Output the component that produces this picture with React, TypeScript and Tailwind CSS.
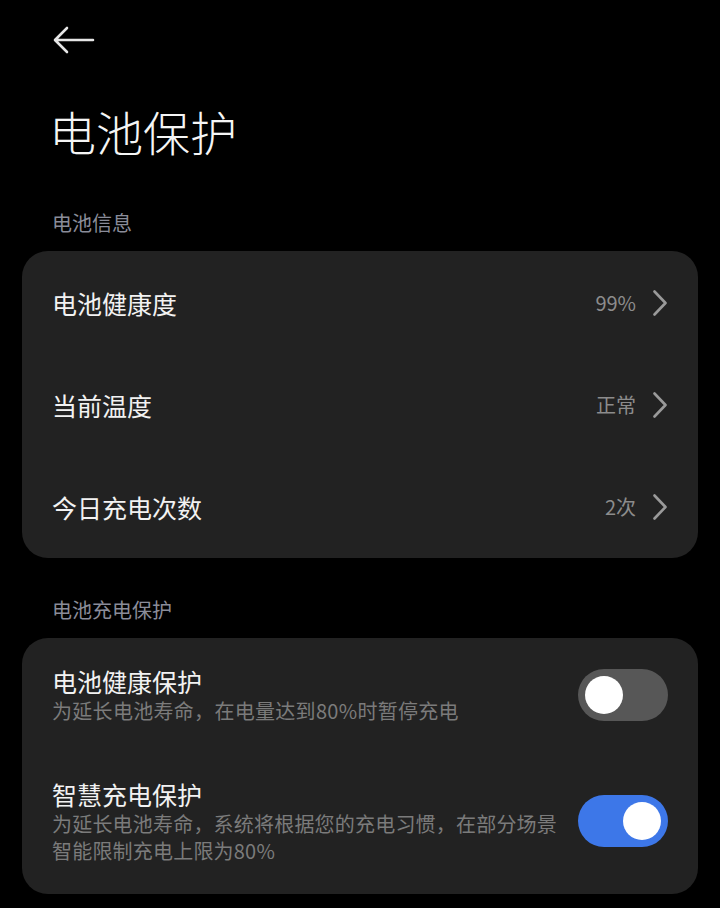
import React from 'react';

const font = { fontFamily: '"Noto Sans CJK SC", "Noto Sans", sans-serif' };

function Chevron() {
  return (
    <svg width="16" height="26" viewBox="0 0 16 26" fill="none" className="ml-[16px]">
      <path d="M2.5 1.5 L13.5 13 L2.5 24.5" stroke="#9a9a9a" strokeWidth="2.6" strokeLinecap="round" strokeLinejoin="round" />
    </svg>
  );
}

function Toggle({ on }: { on: boolean }) {
  return (
    <div
      className={`w-[90px] h-[52px] rounded-full flex items-center px-[7px] shrink-0 ${
        on ? 'bg-[#3d77e8] justify-end' : 'bg-[#575757] justify-start'
      }`}
    >
      <div className="w-[38px] h-[38px] rounded-full bg-white" />
    </div>
  );
}

const infoRows = [
  { label: '电池健康度', value: '99%' },
  { label: '当前温度', value: '正常' },
  { label: '今日充电次数', value: '2次' },
];

export default function App() {
  return (
    <div className="bg-black min-h-[908px] w-[720px] px-[22px] text-[#f2f2f2]" style={font}>
      <div className="h-[80px] flex items-center pl-[31px]">
        <svg width="42" height="28" viewBox="0 0 42 28" fill="none">
          <path d="M40 14 H3 M14 2 L2 14 L14 26" stroke="#e6e6e6" strokeWidth="2.6" strokeLinecap="round" strokeLinejoin="round" />
        </svg>
      </div>

      <h1 className="mt-[23px] pl-[27px] text-[47px] leading-[56px] font-light text-[#f5f5f5]">电池保护</h1>

      <div className="mt-[50px] pl-[30px] text-[20px] leading-[28px] text-[#8a8c99]">电池信息</div>

      <div className="mt-[14px] bg-[#222222] rounded-[26px] pt-px">
        {infoRows.map((r) => (
          <div key={r.label} className="h-[102px] flex items-center pl-[30px] pr-[30px]">
            <div className="flex-1 text-[25px] leading-[32px]">{r.label}</div>
            <div className="text-[20px] text-[#8c8c8c]">{r.value}</div>
            <Chevron />
          </div>
        ))}
      </div>

      <div className="mt-[38px] pl-[30px] text-[20px] leading-[28px] text-[#8a8c99]">电池充电保护</div>

      <div className="mt-[14px] bg-[#222222] rounded-[26px] pt-[27px] pb-[30px] pl-[30px] pr-[30px] flex flex-col gap-[54px]">
        <div className="flex items-center">
          <div className="flex-1">
            <div className="text-[25px] leading-[32px]">电池健康保护</div>
            <div className="text-[20px] leading-[27px] tracking-[0.3px] text-[#7b7b7b]">为延长电池寿命，在电量达到80%时暂停充电</div>
          </div>
          <Toggle on={false} />
        </div>
        <div className="flex items-center">
          <div className="flex-1 pr-[12px]">
            <div className="text-[25px] leading-[32px]">智慧充电保护</div>
            <div className="text-[20px] leading-[27px] tracking-[0.2px] text-[#7b7b7b]">
              为延长电池寿命，系统将根据您的充电习惯，在部分场景智能限制充电上限为80%
            </div>
          </div>
          <Toggle on={true} />
        </div>
      </div>
    </div>
  );
}
